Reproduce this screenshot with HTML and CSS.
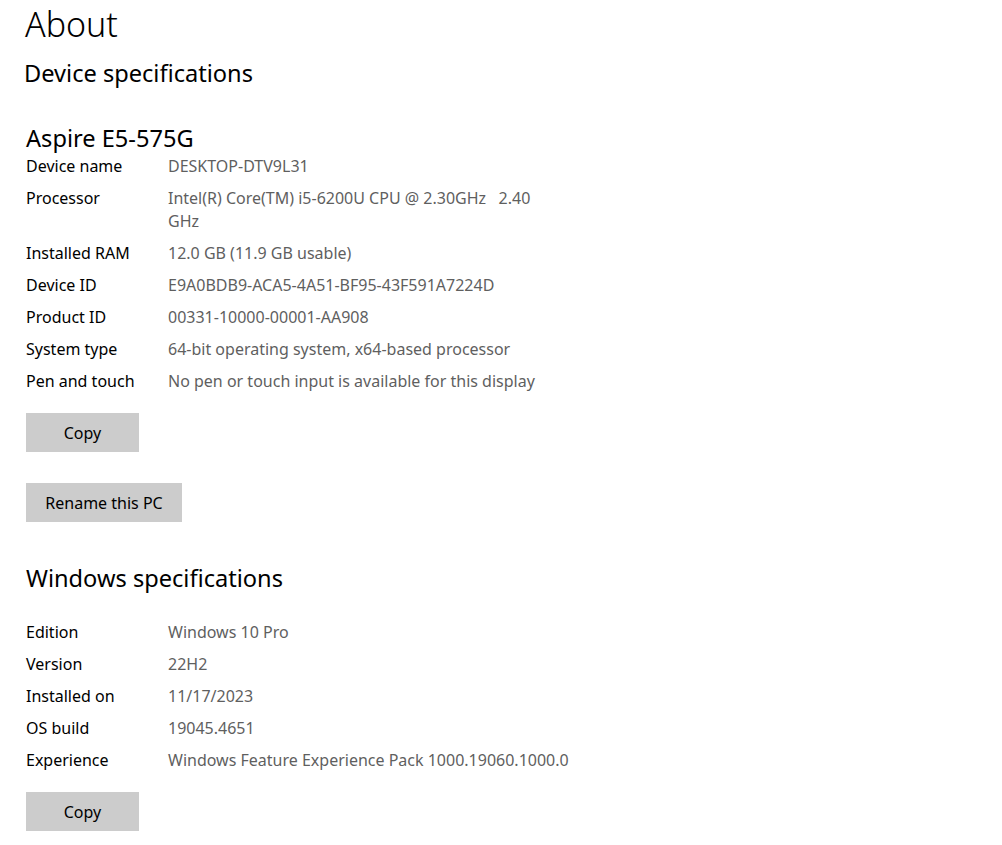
FILE: index.html
```html
<!DOCTYPE html>
<html lang="en">
<head>
<meta charset="utf-8">
<title>About</title>
<link rel="stylesheet" href="styles.css">
</head>
<body>
<main class="page">
  <h1 class="title">About</h1>
  <h2 class="section">Device specifications</h2>
  <h3 class="device">Aspire E5-575G</h3>
  <dl class="specs">
    <div class="row"><dt>Device name</dt><dd>DESKTOP-DTV9L31</dd></div>
    <div class="row"><dt>Processor</dt><dd>Intel(R) Core(TM) i5-6200U CPU @ 2.30GHz&nbsp;&nbsp;&nbsp;2.40 GHz</dd></div>
    <div class="row"><dt>Installed RAM</dt><dd>12.0 GB (11.9 GB usable)</dd></div>
    <div class="row"><dt>Device ID</dt><dd>E9A0BDB9-ACA5-4A51-BF95-43F591A7224D</dd></div>
    <div class="row"><dt>Product ID</dt><dd>00331-10000-00001-AA908</dd></div>
    <div class="row"><dt>System type</dt><dd>64-bit operating system, x64-based processor</dd></div>
    <div class="row"><dt>Pen and touch</dt><dd>No pen or touch input is available for this display</dd></div>
  </dl>
  <button class="btn btn-copy">Copy</button>
  <button class="btn btn-rename">Rename this PC</button>
  <h2 class="section section-win">Windows specifications</h2>
  <dl class="specs specs-win">
    <div class="row"><dt>Edition</dt><dd>Windows 10 Pro</dd></div>
    <div class="row"><dt>Version</dt><dd>22H2</dd></div>
    <div class="row"><dt>Installed on</dt><dd>11/17/2023</dd></div>
    <div class="row"><dt>OS build</dt><dd>19045.4651</dd></div>
    <div class="row"><dt>Experience</dt><dd class="wide">Windows Feature Experience Pack 1000.19060.1000.0</dd></div>
  </dl>
  <button class="btn btn-copy">Copy</button>
</main>
</body>
</html>
```
FILE: styles.css
```css
html, body {
  margin: 0;
  padding: 0;
  background: #ffffff;
}
body {
  font-family: "Noto Sans", "Open Sans", sans-serif;
  color: #000000;
  overflow: hidden;
}
.page {
  display: flex;
  flex-direction: column;
  align-items: flex-start;
  padding: 0 0 0 26px;
  width: 600px;
}
.title {
  margin: 0 0 0 -1px;
  font-size: 34px;
  font-weight: 300;
  line-height: 48px;
}
.section {
  margin: 1px 0 0 -2px;
  font-size: 23.6px;
  font-weight: 400;
  line-height: 48px;
}
.section-win {
  margin: 32px 0 0 0;
}
.device {
  margin: 29px 0 0 0;
  font-size: 23.6px;
  font-weight: 400;
  line-height: 24px;
}
.specs {
  margin: 0;
  display: flex;
  flex-direction: column;
  font-size: 16px;
  line-height: 23px;
}
.specs-win {
  margin-top: 14px;
}
.row {
  display: grid;
  grid-template-columns: 142px 390px;
  padding: 4.5px 0;
}
.row dt {
  margin: 0;
}
.row dd {
  margin: 0;
  color: #5f5f5f;
}
.row dd.wide {
  white-space: nowrap;
}
.btn {
  border: none;
  background: #cccccc;
  font-family: inherit;
  font-size: 16px;
  color: #000;
  height: 39px;
  padding: 0 16px;
  margin-top: 16px;
}
.btn-copy {
  width: 113px;
}
.btn-rename {
  width: 156px;
  margin-top: 31px;
}
```
